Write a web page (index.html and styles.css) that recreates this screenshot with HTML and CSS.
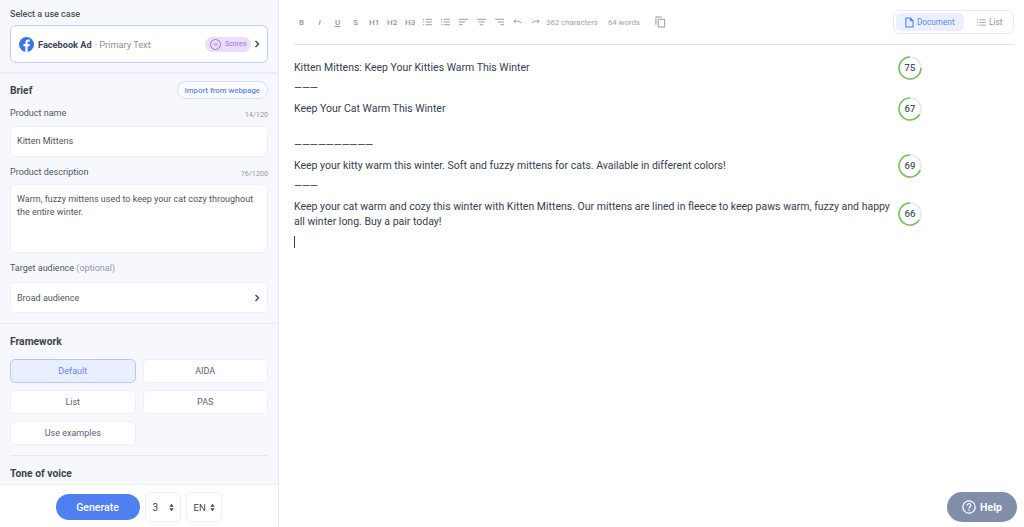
FILE: index.html
```html
<!DOCTYPE html>
<html lang="en">
<head>
    <meta charset="UTF-8">
    <title>Facebook Ad - Primary Text</title>
    <link rel="stylesheet" href="styles.css">
</head>
<body>
    <div class="app">
        <aside class="sidebar">
            <div class="sidebar-scroll">
                <section class="usecase">
                    <h4 class="usecase-title">Select a use case</h4>
                    <div class="usecase-card">
                        <svg class="fb-icon" viewBox="0 0 16 16"><circle cx="8" cy="8" r="8" fill="#3b74e8"/><path d="M9.2 16V9.9h2l.35-2.4H9.2V6.1c0-.7.3-1.2 1.2-1.2h1.2V2.8c-.5-.1-1.1-.15-1.7-.15-1.9 0-3.1 1.1-3.1 3.1v1.75H4.7v2.4h2.1V16z" fill="#fff"/></svg>
                        <span class="usecase-name">Facebook Ad</span>
                        <span class="usecase-sub">· Primary Text</span>
                        <span class="score-pill">
                            <span class="score-pill-dot">90</span>
                            Scores
                        </span>
                        <svg class="chev" viewBox="0 0 8 8"><path d="M2.5 1l3 3-3 3" fill="none" stroke="#3d4458" stroke-width="1.4"/></svg>
                    </div>
                </section>

                <section class="brief">
                    <div class="brief-head">
                        <h3>Brief</h3>
                        <button class="import-btn">Import from webpage</button>
                    </div>
                    <div class="field-label field-label-name"><span>Product name</span><small>14/120</small></div>
                    <div class="input input-name">Kitten Mittens</div>
                    <div class="field-label field-label-desc"><span>Product description</span><small>76/1200</small></div>
                    <div class="input input-desc">Warm, fuzzy mittens used to keep your cat cozy throughout the entire winter.</div>
                    <div class="field-label field-label-aud"><span>Target audience <em>(optional)</em></span></div>
                    <div class="input input-aud">
                        Broad audience
                        <svg class="chev" viewBox="0 0 8 8"><path d="M2.5 1l3 3-3 3" fill="none" stroke="#3d4458" stroke-width="1.4"/></svg>
                    </div>
                </section>

                <section class="framework">
                    <h3>Framework</h3>
                    <div class="framework-grid">
                        <button class="fw-btn active">Default</button>
                        <button class="fw-btn">AIDA</button>
                        <button class="fw-btn">List</button>
                        <button class="fw-btn">PAS</button>
                        <button class="fw-btn">Use examples</button>
                    </div>
                    <div class="divider"></div>
                    <h3>Tone of voice</h3>
                </section>
            </div>
            <div class="sidebar-foot">
                <button class="generate">Generate</button>
                <div class="select select-num">3
                    <svg class="updown" viewBox="0 0 6 10"><path d="M3 .5L5.6 4H.4zM3 9.5L.4 6h5.2z" fill="#3d4458"/></svg>
                </div>
                <div class="select select-lang">EN
                    <svg class="updown" viewBox="0 0 6 10"><path d="M3 .5L5.6 4H.4zM3 9.5L.4 6h5.2z" fill="#3d4458"/></svg>
                </div>
            </div>
        </aside>

        <main class="editor">
            <div class="toolbar">
                <div class="tools">
                    <span class="tool tool-b">B</span>
                    <span class="tool tool-i">I</span>
                    <span class="tool tool-u">U</span>
                    <span class="tool tool-s">S</span>
                    <span class="tool">H1</span>
                    <span class="tool">H2</span>
                    <span class="tool">H3</span>
                    <svg class="tool-icon" viewBox="0 0 10 8"><path d="M0 1h1.2M3 1h7M0 4h1.2M3 4h7M0 7h1.2M3 7h7" stroke="#8d93a5" fill="none"/></svg>
                    <svg class="tool-icon" viewBox="0 0 10 8"><path d="M.6.4v1.6M.2 4h1.4M.2 7h1.4M3 1h7M3 4h7M3 7h7" stroke="#8d93a5" fill="none"/></svg>
                    <svg class="tool-icon" viewBox="0 0 10 8"><path d="M0 1h10M0 4h7M0 7h4" stroke="#8d93a5" fill="none"/></svg>
                    <svg class="tool-icon" viewBox="0 0 10 8"><path d="M0 1h10M1.5 4h7M3 7h4" stroke="#8d93a5" fill="none"/></svg>
                    <svg class="tool-icon" viewBox="0 0 10 8"><path d="M0 1h10M3 4h7M6 7h4" stroke="#8d93a5" fill="none"/></svg>
                    <svg class="tool-icon" viewBox="0 0 10 6"><path d="M3 .5L.8 2.3 3 4M1 2.3c3-.8 6-.6 8.5 2" stroke="#8d93a5" fill="none"/></svg>
                    <svg class="tool-icon" viewBox="0 0 10 6"><path d="M7 .5l2.2 1.8L7 4M9 2.3c-3-.8-6-.6-8.500 2" stroke="#8d93a5" fill="none"/></svg>
                </div>
                <span class="count count-chars">362 characters</span>
                <span class="count count-words">64 words</span>
                <svg class="copy-icon" viewBox="0 0 12 13"><path d="M3.500 3.500h7v8.500h-7zM1 9.500V1h6.500" fill="none" stroke="#8d93a5" stroke-width="1"/></svg>
                <div class="view-switch">
                    <span class="view-tab active">
                        <svg viewBox="0 0 10 12"><path d="M1 1h5l3 3v7H1zM6 1v3h3" fill="none" stroke="#4f7ff0" stroke-width="1.200"/></svg>
                        Document
                    </span>
                    <span class="view-tab">
                        <svg viewBox="0 0 12 9"><path d="M0 1h1.500M3 1h9M0 4.500h1.500M3 4.500h9M0 8h1.500M3 8h9" fill="none" stroke="#8d93a5"/></svg>
                        List
                    </span>
                </div>
            </div>

            <div class="doc">
                <div class="doc-row row-1">
                    <p>Kitten Mittens: Keep Your Kitties Warm This Winter</p>
                    <svg class="ring" viewBox="0 0 24 24"><circle cx="12" cy="12" r="11" class="ring-bg"/><circle cx="12" cy="12" r="11" class="ring-val" pathLength="100" stroke-dasharray="75 100" transform="rotate(-360 12 12)"/><text x="12" y="15.300">75</text></svg>
                </div>
                <p class="sep sep-1">———</p>
                <div class="doc-row row-2">
                    <p>Keep Your Cat Warm This Winter</p>
                    <svg class="ring" viewBox="0 0 24 24"><circle cx="12" cy="12" r="11" class="ring-bg"/><circle cx="12" cy="12" r="11" class="ring-val" pathLength="100" stroke-dasharray="67 100" transform="rotate(-331 12 12)"/><text x="12" y="15.300">67</text></svg>
                </div>
                <p class="sep sep-long">——————————</p>
                <div class="doc-row row-3">
                    <p>Keep your kitty warm this winter. Soft and fuzzy mittens for cats. Available in different colors!</p>
                    <svg class="ring" viewBox="0 0 24 24"><circle cx="12" cy="12" r="11" class="ring-bg"/><circle cx="12" cy="12" r="11" class="ring-val" pathLength="100" stroke-dasharray="69 100" transform="rotate(-338 12 12)"/><text x="12" y="15.300">69</text></svg>
                </div>
                <p class="sep sep-2">———</p>
                <div class="doc-row row-4">
                    <p>Keep your cat warm and cozy this winter with Kitten Mittens. Our mittens are lined in fleece to keep paws warm, fuzzy and happy all winter long. Buy a pair today!</p>
                    <svg class="ring" viewBox="0 0 24 24"><circle cx="12" cy="12" r="11" class="ring-bg"/><circle cx="12" cy="12" r="11" class="ring-val" pathLength="100" stroke-dasharray="66 100" transform="rotate(-328 12 12)"/><text x="12" y="15.300">66</text></svg>
                </div>
                <div class="caret"></div>
            </div>
        </main>
    </div>

    <button class="help">
        <svg viewBox="0 0 14 14"><circle cx="7" cy="7" r="6.200" fill="none" stroke="#fff" stroke-width="1.200"/><path d="M5.200 5.400c0-2.300 3.700-2.300 3.700 0 0 1.400-1.900 1.400-1.900 3" fill="none" stroke="#fff" stroke-width="1.200"/><circle cx="7" cy="10.300" r=".8" fill="#fff"/></svg>
        Help
    </button>
</body>
</html>
```

FILE: styles.css
```css
* {
    box-sizing: border-box;
}
html, body {
    height: 100%;
}
body {
    margin: 0;
    overflow: hidden;
    background: #fff;
    color: #3d4458;
    font-family: 'Roboto', sans-serif;
    font-size: 9.200px;
}
button {
    font-family: inherit;
    cursor: pointer;
}
h3, h4, p {
    margin: 0;
}
.app {
    display: flex;
    height: 527px;
}

/* sidebar */
.sidebar {
    width: 279px;
    flex: none;
    display: flex;
    flex-direction: column;
    border-right: 1px solid #e6eaf6;
}
.sidebar-scroll {
    flex: 1;
    min-height: 0;
    overflow: hidden;
    background: #f7f8fd;
}
.sidebar h3 {
    font-size: 10.300px;
    font-weight: 700;
    color: #3d4250;
}
.usecase {
    height: 74px;
    padding: 8px 10px 0;
    border-bottom: 2px solid #e6ebfa;
}
.usecase-title {
    font-size: 9px;
    font-weight: 500;
    line-height: 12px;
    color: #4a5060;
}
.usecase-card {
    display: flex;
    align-items: center;
    height: 38px;
    margin-top: 5px;
    padding: 0 6px 0 8px;
    background: #fff;
    border: 1px solid #bfd0fb;
    border-radius: 6px;
}
.fb-icon {
    width: 15px;
    height: 15px;
    margin-right: 4px;
}
.usecase-name {
    font-weight: 700;
    color: #3d4458;
}
.usecase-sub {
    margin-left: 3px;
    color: #8a90a2;
}
.score-pill {
    display: flex;
    align-items: center;
    gap: 4px;
    width: 46px;
    height: 15px;
    margin-left: auto;
    padding-left: 5px;
    background: #eadffb;
    border-radius: 8px;
    color: #a46ee8;
    font-size: 7px;
}
.score-pill-dot {
    display: flex;
    align-items: center;
    justify-content: center;
    width: 11px;
    height: 11px;
    border: 1px solid #a46ee8;
    border-radius: 50%;
    font-size: 4px;
}
.chev {
    width: 8px;
    height: 8px;
    margin-left: 2px;
}
.brief {
    height: 250px;
    padding: 7px 10px 0;
    border-bottom: 1px solid #eaedf7;
}
.brief-head {
    display: flex;
    align-items: center;
    justify-content: space-between;
    height: 18px;
}
.import-btn {
    height: 18px;
    padding: 0 7px;
    background: #fbfcff;
    border: 1px solid #d5dffa;
    border-radius: 9px;
    color: #5f86ef;
    font-size: 7.800px;
    font-weight: 500;
}
.field-label {
    display: flex;
    align-items: flex-end;
    justify-content: space-between;
    font-size: 9px;
    line-height: 11px;
    color: #4f5564;
}
.field-label small {
    font-size: 7.200px;
    line-height: 9px;
    color: #9197a7;
}
.field-label em {
    font-style: normal;
    color: #9197a7;
}
.field-label-name {
    margin-top: 9px;
}
.field-label-desc {
    margin-top: 10px;
}
.field-label-aud {
    margin-top: 10px;
}
.input {
    margin-top: 6px;
    padding: 0 6px;
    background: #fff;
    border: 1px solid #edf0fa;
    border-radius: 5px;
    color: #4f5564;
    font-size: 9px;
}
.input-name {
    height: 31px;
    margin-top: 7px;
    line-height: 29px;
}
.input-desc {
    height: 69px;
    padding-top: 8px;
    padding-right: 10px;
    line-height: 13px;
}
.input-aud {
    display: flex;
    align-items: center;
    justify-content: space-between;
    height: 31px;
    margin-top: 8px;
}
.framework {
    padding: 11px 10px 0;
}
.framework-grid {
    display: grid;
    grid-template-columns: 1fr 1fr;
    gap: 7px;
    margin-top: 11px;
}
.fw-btn {
    height: 24px;
    padding: 0;
    background: #fff;
    border: 1px solid #edf0fa;
    border-radius: 5px;
    color: #5d6372;
    font-size: 9px;
}
.fw-btn.active {
    background: #e9effe;
    border-color: #b4c8fa;
    color: #5f86ef;
}
.divider {
    height: 1px;
    margin: 10px 0 11px;
    background: #e3e8f8;
}
.sidebar-foot {
    flex: none;
    display: flex;
    align-items: center;
    justify-content: center;
    gap: 5px;
    height: 43px;
    padding-top: 2px;
    padding-right: 1px;
    border-top: 1px solid #eef0f8;
    background: #fff;
}
.generate {
    width: 84px;
    height: 26px;
    background: #4f7ff0;
    border: 0;
    border-radius: 13px;
    color: #fff;
    font-size: 10.500px;
    font-weight: 500;
}
.select {
    display: flex;
    align-items: center;
    justify-content: space-between;
    width: 36px;
    height: 30px;
    padding: 0 6px 0 7px;
    background: #fff;
    border: 1px solid #edf0fa;
    border-radius: 5px;
    font-size: 10px;
}
.select-lang {
    font-size: 9.500px;
}
.updown {
    width: 5px;
    height: 9px;
}

/* editor */
.editor {
    flex: 1;
    min-width: 0;
    padding: 0 10px 0 15px;
}
.toolbar {
    display: flex;
    align-items: center;
    height: 45px;
    border-bottom: 1px solid #dfe2ea;
}
.tools {
    display: flex;
    align-items: center;
    gap: 9px;
    margin-left: 3px;
}
.tool {
    width: 9px;
    text-align: center;
    font-size: 8px;
    font-weight: 500;
    color: #8d93a5;
}
.tool-i {
    font-style: italic;
}
.tool-u {
    text-decoration: underline;
}
.tool-icon {
    width: 9px;
    height: 8px;
}
.count {
    font-size: 7.800px;
    color: #9da2b2;
}
.count-chars {
    margin-left: 6px;
}
.count-words {
    margin-left: 10px;
}
.copy-icon {
    width: 11px;
    height: 12px;
    margin-left: 15px;
}
.view-switch {
    display: flex;
    align-items: center;
    width: 121px;
    height: 24px;
    margin-left: auto;
    padding: 2px;
    border: 1px solid #e6ebfa;
    border-radius: 6px;
}
.view-tab {
    display: flex;
    align-items: center;
    gap: 3px;
    height: 18px;
    padding-left: 13px;
    border-radius: 5px;
    color: #8d93a5;
    font-size: 8.200px;
}
.view-tab svg {
    width: 9px;
    height: 9px;
}
.view-tab.active {
    width: 68px;
    padding-left: 9px;
    background: #eaf0fe;
    color: #5f86ef;
}
.view-tab.active svg {
    height: 11px;
}
.doc {
    font-size: 10.500px;
    line-height: 15px;
    color: #363d50;
}
.doc-row {
    position: relative;
    width: 598px;
}
.ring {
    position: absolute;
    left: 604px;
    top: 50%;
    width: 24px;
    height: 24px;
    margin-top: -12px;
}
.ring-bg, .ring-val {
    fill: none;
    stroke-width: 1.500;
}
.ring-bg {
    stroke: #e6e8f0;
}
.ring-val {
    stroke: #77c05a;
}
.ring text {
    fill: #4a5060;
    font-size: 9.500px;
    font-weight: 500;
    text-anchor: middle;
}
.sep {
    white-space: nowrap;
    letter-spacing: -.3px;
}
.row-1 {
    margin-top: 15px;
}
.sep-1 {
    margin-top: 5px;
}
.row-2 {
    margin-top: 6px;
}
.sep-long {
    margin-top: 21px;
}
.row-3 {
    margin-top: 6px;
}
.sep-2 {
    margin-top: 5px;
}
.row-4 {
    margin-top: 6px;
}
.caret {
    width: 1px;
    height: 12px;
    margin-top: 7px;
    background: #363d50;
}

.help {
    position: fixed;
    right: 7px;
    bottom: 5px;
    display: flex;
    align-items: center;
    justify-content: center;
    gap: 4px;
    width: 70px;
    height: 30px;
    background: #808ea9;
    border: 0;
    border-radius: 15px;
    color: #fff;
    font-size: 10.500px;
    font-weight: 700;
}
.help svg {
    width: 14px;
    height: 14px;
}
```
